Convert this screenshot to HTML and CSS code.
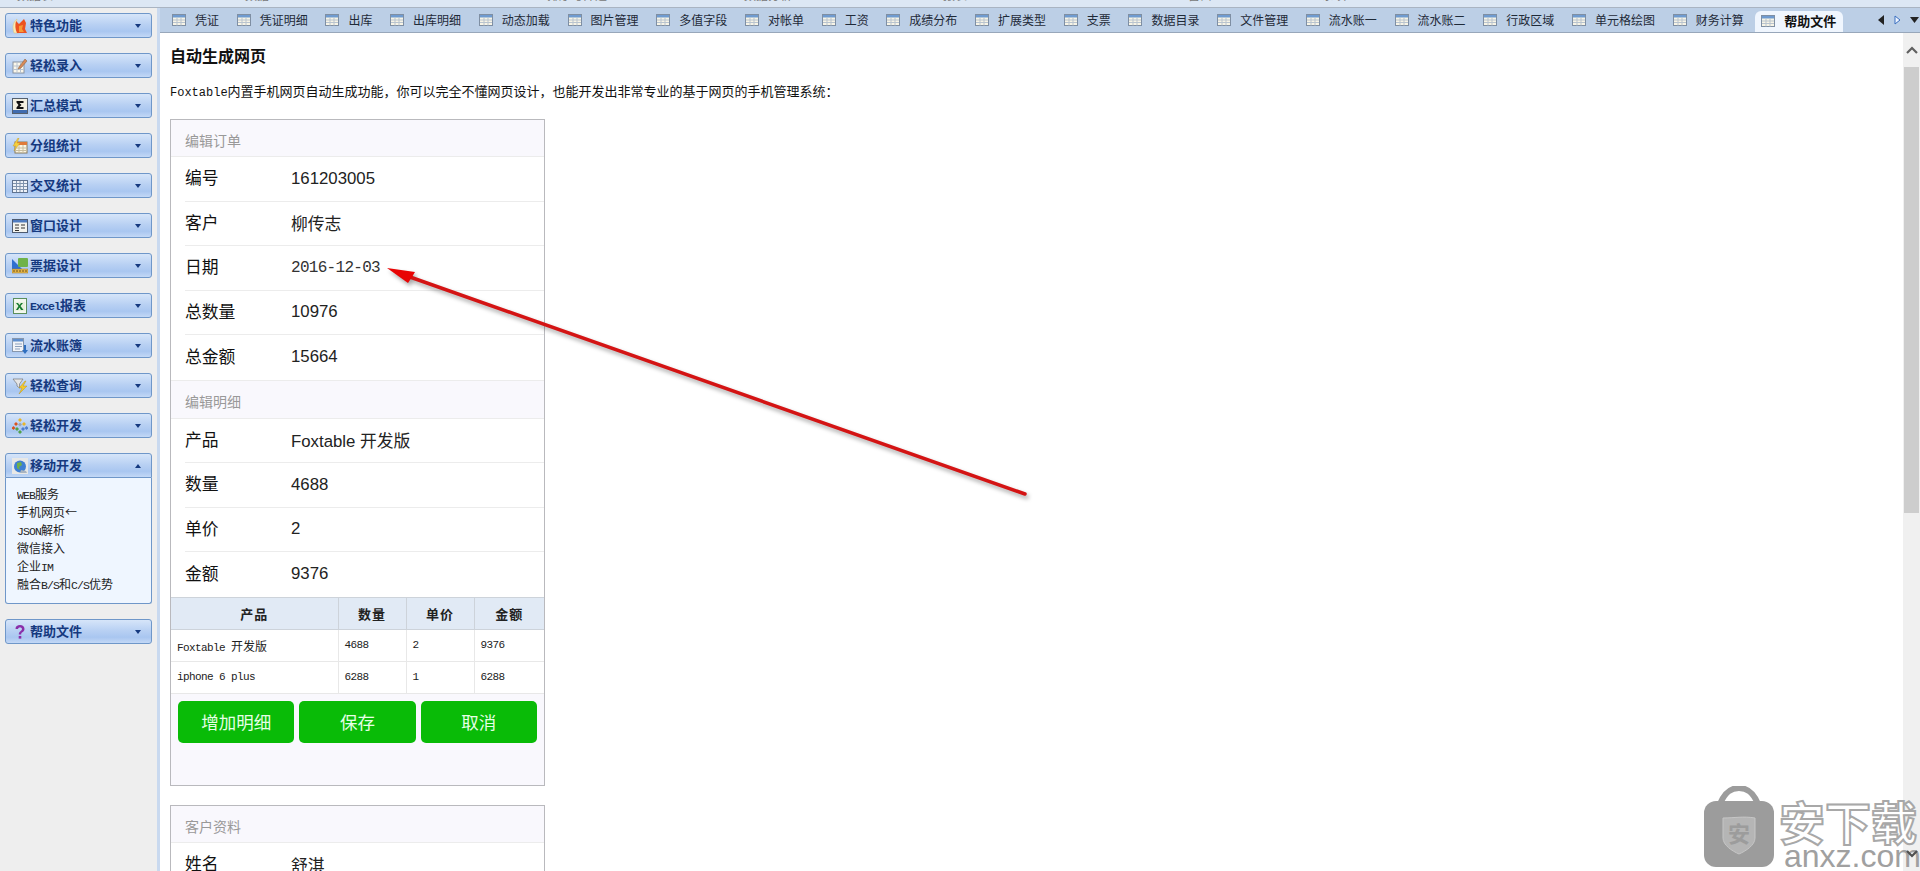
FILE: index.html
```html
<!DOCTYPE html>
<html lang="zh-CN">
 <head>
  <meta charset="UTF-8" />
  <title>Foxtable 帮助文件</title>
  <link rel="stylesheet" href="styles.css">
 </head>
 <body>
  <svg class="defs" width="0" height="0">
   <symbol id="tbl" viewBox="0 0 14 12">
    <rect x="0.5" y="0.5" width="13" height="11" fill="#f7f4e6" stroke="#7f8fa3" />
    <rect x="1" y="1" width="12" height="2.5" fill="#6f9bd0" />
    <path d="M1 6h12M1 8.5h12M5 3.5v8M9 3.5v8" stroke="#b9c4cf" fill="none" />
   </symbol>
  </svg>

  <!-- ribbon is cut off, only the group captions show -->
  <div class="strip">
   <span>数据表</span>
   <span>数据</span>
   <span>排序与筛选</span>
   <span>数据分析</span>
   <span>报表</span>
   <span>窗口</span>
   <span>杂项</span>
  </div>

  <div class="app">
   <div class="sidebar">
    <div class="nav-btn">
     <svg class="nav-icon" viewBox="0 0 16 16"><path d="M5 1C1 4 0 9 2 15h5C4 11 4 6 5 1z" fill="#f8e9b4" stroke="#d9c27a" stroke-width=".5" /><path d="M4 3l3 3 5-5 2 4-1 6 2 4H5C3 11 3 7 4 3z" fill="#ec5220" /><path d="M7 8l4-1-1 4 2 3H7z" fill="#f79a34" /></svg>
     <span>特色功能</span><i class="caret"></i>
    </div>
    <div class="nav-btn">
     <svg class="nav-icon" viewBox="0 0 16 16"><rect x="1" y="4" width="11" height="11" fill="#fbf7ea" stroke="#8a93a0" /><path d="M1 8h11M1 11.500h11M5 4v11M8.500 4v11" stroke="#b9c3d0" /><path d="M7 9l6-8 2 2-6 7-3 1z" fill="#d98a5a" stroke="#7a5a3a" stroke-width=".5" /></svg>
     <span>轻松录入</span><i class="caret"></i>
    </div>
    <div class="nav-btn">
     <svg class="nav-icon" viewBox="0 0 16 16"><rect x="0.500" y="0.500" width="15" height="15" fill="#f3efe0" stroke="#55606e" /><rect x="1" y="12" width="14" height="3" fill="#3f6cb0" /><path d="M4.500 3h7v2H7.500L9.500 7 7.500 9h4v2h-7V9.500L6.500 7 4.500 4.500z" fill="#111" /></svg>
     <span>汇总模式</span><i class="caret"></i>
    </div>
    <div class="nav-btn">
     <svg class="nav-icon" viewBox="0 0 16 16"><rect x="3" y="4" width="12" height="11" fill="#fbf6e4" stroke="#8a7d5c" /><rect x="3" y="4" width="12" height="3" fill="#e07b3a" /><path d="M3 10h12M3 12.500h12M7 7v8M11 7v8" stroke="#c8bea0" /><path d="M6 0L1 8h3l-2 5 6-8H5l2-5z" fill="#f6cf3e" stroke="#c49a20" stroke-width=".4" /></svg>
     <span>分组统计</span><i class="caret"></i>
    </div>
    <div class="nav-btn">
     <svg class="nav-icon" viewBox="0 0 16 16"><rect x="0.500" y="2.500" width="15" height="12" fill="#eef2f8" stroke="#5f7390" /><path d="M1 5.500h14M1 8.500h14M1 11.500h14M4.500 3v11M8 3v11M11.500 3v11" stroke="#7f93ad" /></svg>
     <span>交叉统计</span><i class="caret"></i>
    </div>
    <div class="nav-btn">
     <svg class="nav-icon" viewBox="0 0 16 16"><rect x="0.500" y="1.500" width="15" height="13" fill="#f4f4ee" stroke="#4d5b70" /><rect x="1" y="2" width="14" height="2.500" fill="#4f7cc0" /><path d="M3 7h4M3 10h4M3 12.500h4M9 7h4M9 10h4" stroke="#333" /></svg>
     <span>窗口设计</span><i class="caret"></i>
    </div>
    <div class="nav-btn">
     <svg class="nav-icon" viewBox="0 0 16 16"><path d="M0 1l10 10H0z" fill="#2f6fd0" /><rect x="6" y="0" width="10" height="9" rx="1" fill="#6fb24a" /><rect x="0" y="11" width="16" height="4" fill="#e7b64a" stroke="#9a7a2a" stroke-width=".5" /><path d="M2 12v2M5 12v2M8 12v2M11 12v2M14 12v2" stroke="#6a5218" /></svg>
     <span>票据设计</span><i class="caret"></i>
    </div>
    <div class="nav-btn">
     <svg class="nav-icon" viewBox="0 0 16 16"><rect x="1.500" y="0.500" width="13" height="15" fill="#f2f7ee" stroke="#5c8f5c" /><rect x="3" y="4" width="10" height="9" fill="#e7f0dd" /><path d="M4 5l2.500 3L4 12h2l1.500-2.500L9 12h2.500L8.500 8 11 5H9L7.500 7 6 5z" fill="#157a2e" /></svg>
     <span><b class="lat">Excel</b>报表</span><i class="caret"></i>
    </div>
    <div class="nav-btn">
     <svg class="nav-icon" viewBox="0 0 16 16"><rect x="0.500" y="0.500" width="11" height="13" fill="#f2f4f8" stroke="#8797ad" /><rect x="1" y="1" width="10" height="2.500" fill="#5f8fce" /><path d="M3 6h7M3 8.500h7M3 11h5" stroke="#8ba0bd" /><path d="M12 7v5h-2l3 4 3-4h-2V7z" fill="#2f6fc0" /></svg>
     <span>流水账簿</span><i class="caret"></i>
    </div>
    <div class="nav-btn">
     <svg class="nav-icon" viewBox="0 0 16 16"><path d="M1 1h10L7.500 6v4L5 8V6z" fill="#e6e6e6" stroke="#777" stroke-width=".7" /><path d="M13 3L7 10h3l-3 6 8-8h-4l3-5z" fill="#f4c92c" stroke="#b08a10" stroke-width=".4" /></svg>
     <span>轻松查询</span><i class="caret"></i>
    </div>
    <div class="nav-btn">
     <svg class="nav-icon" viewBox="0 0 16 16"><path d="M8 0l2 2-2 2-2-2z" fill="#e8b52c" /><path d="M4 4l2 2-2 2-2-2z" fill="#d9541e" /><path d="M12 4l2 2-2 2-2-2z" fill="#e8b52c" /><path d="M8 4.500l2 2-2 2-2-2z" fill="#9aa7b5" /><path d="M1.500 8l2 2-2 2-2-2z" fill="#d9541e" /><path d="M14.500 8l2 2-2 2-2-2z" fill="#4f7fd0" /><path d="M5 9l2 2-2 2-2-2z" fill="#52a24a" /><path d="M11 9l2 2-2 2-2-2z" fill="#4f7fd0" /><path d="M8 12l2 2-2 2-2-2z" fill="#52a24a" /></svg>
     <span>轻松开发</span><i class="caret"></i>
    </div>
    <div class="nav-btn open">
     <svg class="nav-icon" viewBox="0 0 16 16"><rect x="0" y="0" width="16" height="16" fill="#e8e8e6" /><circle cx="8" cy="8.500" r="6" fill="#3f7fd2" /><path d="M5 5l4-1 1 3-3 2 1 3-3-2z" fill="#6fb04a" /><path d="M9 12l5 1 1 2H8z" fill="#a9b4c0" /></svg>
     <span>移动开发</span><i class="caret up"></i>
    </div>
    <div class="nav-panel">
     <div><span class="lat">WEB</span>服务</div>
     <div>手机网页←</div>
     <div><span class="lat">JSON</span>解析</div>
     <div>微信接入</div>
     <div>企业<span class="lat">IM</span></div>
     <div>融合<span class="lat">B/S</span>和<span class="lat">C/S</span>优势</div>
    </div>
    <div class="nav-btn">
     <svg class="nav-icon" viewBox="0 0 16 16"><path d="M3.500 5c0-3 2-4 4.500-4s4.500 1.500 4.500 4c0 2-1.300 2.800-2.500 3.600C9.200 9.200 9.200 9.800 9.200 10.500H6.800c0-1.500.3-2.400 1.600-3.300 1-.7 1.600-1.200 1.600-2.100 0-1-.8-1.600-2-1.600S6 4.100 6 5z" fill="#8a2fa8" /><rect x="6.700" y="12" width="2.600" height="2.600" fill="#8a2fa8" /></svg>
     <span>帮助文件</span><i class="caret"></i>
    </div>
   </div>

   <div class="main">
    <div class="tabs">
     <div class="tab"><svg class="tab-icon"><use href="#tbl" /></svg>凭证</div>
     <div class="tab"><svg class="tab-icon"><use href="#tbl" /></svg>凭证明细</div>
     <div class="tab"><svg class="tab-icon"><use href="#tbl" /></svg>出库</div>
     <div class="tab"><svg class="tab-icon"><use href="#tbl" /></svg>出库明细</div>
     <div class="tab"><svg class="tab-icon"><use href="#tbl" /></svg>动态加载</div>
     <div class="tab"><svg class="tab-icon"><use href="#tbl" /></svg>图片管理</div>
     <div class="tab"><svg class="tab-icon"><use href="#tbl" /></svg>多值字段</div>
     <div class="tab"><svg class="tab-icon"><use href="#tbl" /></svg>对帐单</div>
     <div class="tab"><svg class="tab-icon"><use href="#tbl" /></svg>工资</div>
     <div class="tab"><svg class="tab-icon"><use href="#tbl" /></svg>成绩分布</div>
     <div class="tab"><svg class="tab-icon"><use href="#tbl" /></svg>扩展类型</div>
     <div class="tab"><svg class="tab-icon"><use href="#tbl" /></svg>支票</div>
     <div class="tab"><svg class="tab-icon"><use href="#tbl" /></svg>数据目录</div>
     <div class="tab"><svg class="tab-icon"><use href="#tbl" /></svg>文件管理</div>
     <div class="tab"><svg class="tab-icon"><use href="#tbl" /></svg>流水账一</div>
     <div class="tab"><svg class="tab-icon"><use href="#tbl" /></svg>流水账二</div>
     <div class="tab"><svg class="tab-icon"><use href="#tbl" /></svg>行政区域</div>
     <div class="tab"><svg class="tab-icon"><use href="#tbl" /></svg>单元格绘图</div>
     <div class="tab"><svg class="tab-icon"><use href="#tbl" /></svg>财务计算</div>
     <div class="tab active"><svg class="tab-icon"><use href="#tbl" /></svg>帮助文件</div>
     <div class="tab-arrows">
      <svg width="7" height="10" viewBox="0 0 7 10"><path d="M6 0v10L0 5z" fill="#222" /></svg>
      <svg width="7" height="10" viewBox="0 0 7 10"><path d="M1 1v8l5-4z" fill="#eef4ff" stroke="#3a6fc0" /></svg>
      <svg width="9" height="6" viewBox="0 0 9 6"><path d="M0 0h9L4.500 6z" fill="#222" /></svg>
     </div>
    </div>

    <div class="view">
     <div class="page">
      <h2>自动生成网页</h2>
      <p class="intro"><span class="intro-lat">Foxtable</span>内置手机网页自动生成功能，你可以完全不懂网页设计，也能开发出非常专业的基于网页的手机管理系统：</p>

      <div class="card">
       <div class="sec-title">编辑订单</div>
       <div class="row"><label>编号</label><span>161203005</span></div>
       <div class="row"><label>客户</label><span>柳传志</span></div>
       <div class="row"><label>日期</label><span class="date">2016-12-03</span></div>
       <div class="row"><label>总数量</label><span>10976</span></div>
       <div class="row"><label>总金额</label><span>15664</span></div>
       <div class="sec-title">编辑明细</div>
       <div class="row"><label>产品</label><span>Foxtable 开发版</span></div>
       <div class="row"><label>数量</label><span>4688</span></div>
       <div class="row"><label>单价</label><span>2</span></div>
       <div class="row"><label>金额</label><span>9376</span></div>
       <table class="detail">
        <thead>
         <tr><th>产品</th><th>数量</th><th>单价</th><th>金额</th></tr>
        </thead>
        <tbody>
         <tr><td>Foxtable <span class="zh">开发版</span></td><td>4688</td><td>2</td><td>9376</td></tr>
         <tr><td>iphone 6 plus</td><td>6288</td><td>1</td><td>6288</td></tr>
        </tbody>
       </table>
       <div class="actions">
        <button>增加明细</button>
        <button>保存</button>
        <button>取消</button>
       </div>
      </div>

      <div class="card">
       <div class="sec-title">客户资料</div>
       <div class="row"><label>姓名</label><span>舒淇</span></div>
      </div>
     </div>

     <div class="scroll">
      <div class="scroll-btn">
       <svg width="12" height="8" viewBox="0 0 12 8"><path d="M1 7l5-5 5 5" fill="none" stroke="#606060" stroke-width="2.200" /></svg>
      </div>
      <div class="thumb"></div>
      <div class="scroll-btn down">
       <svg width="12" height="8" viewBox="0 0 12 8"><path d="M1 1l5 5 5-5" fill="none" stroke="#505050" stroke-width="2.200" /></svg>
      </div>
     </div>
    </div>
   </div>
  </div>

  <!-- annotation drawn on top of the screenshot -->
  <svg class="pointer" width="1920" height="871" viewBox="0 0 1920 871">
   <path d="M410 277L1025 494" stroke="#d41414" stroke-width="3.500" stroke-linecap="round" />
   <path d="M387 268L415 272 412 277 408 283z" fill="#e80404" />
  </svg>

  <div class="watermark">
   <svg class="wm-logo" width="72" height="82" viewBox="0 0 72 82">
    <path d="M17 18C22 6 28 2 36 2s14 4 19 16" fill="none" stroke="#9c9c9c" stroke-width="6" />
    <rect x="1" y="15" width="70" height="66" rx="12" fill="#9c9c9c" />
    <path d="M20 32c11 0 21-2 32 0v20c0 7-9 13-16 16-7-3-16-9-16-16z" fill="#b5b5b5" stroke="#c6c6c6" />
    <text x="36" y="56" text-anchor="middle" class="wm-mark">安</text>
   </svg>
   <div class="wm-text">
    <div class="wm-zh">安下载</div>
    <div class="wm-en">anxz.com</div>
   </div>
  </div>
 </body>
</html>
```
FILE: styles.css
```css
html, body {
 margin: 0;
 height: 871px;
 overflow: hidden;
}
body {
 display: flex;
 flex-direction: column;
 position: relative;
 font-family: "Liberation Mono", "Noto Sans CJK SC", monospace;
 font-size: 12px;
 color: #222;
 background: #fff;
}
.defs {
 position: absolute;
}

/* top strip */
.strip {
 display: flex;
 height: 7px;
 flex: none;
 overflow: hidden;
 background: #dce7f4;
 border-bottom: 1px solid #a9b4c2;
 color: #777;
}
.strip span {
 margin-top: -10px;
 line-height: 14px;
 white-space: nowrap;
}
.strip span:nth-child(1) { margin-left: 17px; }
.strip span:nth-child(2) { margin-left: 192px; }
.strip span:nth-child(3) { margin-left: 278px; }
.strip span:nth-child(4) { margin-left: 137px; }
.strip span:nth-child(5) { margin-left: 151px; }
.strip span:nth-child(6) { margin-left: 221px; }
.strip span:nth-child(7) { margin-left: 110px; }

.app {
 display: flex;
 flex: 1;
 min-height: 0;
}

/* left panel */
.sidebar {
 width: 147px;
 flex: none;
 padding: 5px 5px 0;
 background: #eeeeee;
 border-right: 3px solid #c9d9ef;
}
.nav-btn {
 display: flex;
 align-items: center;
 box-sizing: border-box;
 height: 25px;
 margin-bottom: 15px;
 padding: 0 10px 0 6px;
 border: 1px solid #6f97c9;
 border-radius: 3px;
 background: linear-gradient(#d6e5f9, #b9d1f3 45%, #a9c6f0 75%, #c3d8f6);
 color: #15397f;
 font-family: "Noto Sans CJK SC", sans-serif;
 font-size: 13px;
 font-weight: 700;
}
.nav-btn span {
 flex: 1;
 margin-left: 2px;
 line-height: 20px;
 height: 22px;
}
.nav-btn .lat {
 font-family: "Liberation Mono", monospace;
 font-size: 11.500px;
 letter-spacing: -.9px;
}
.nav-btn.open {
 margin-bottom: 0;
 border-radius: 3px 3px 0 0;
}
.nav-icon {
 width: 16px;
 height: 16px;
 flex: none;
}
.caret {
 width: 0;
 height: 0;
 border-left: 3.5px solid transparent;
 border-right: 3.5px solid transparent;
 border-top: 4px solid #15397f;
}
.caret.up {
 border-top: none;
 border-bottom: 4px solid #15397f;
}
.nav-panel {
 box-sizing: border-box;
 height: 126px;
 margin-bottom: 15px;
 padding: 7px 0 0 11px;
 border: 1px solid #6f97c9;
 border-top: none;
 border-radius: 0 0 3px 3px;
 background: #eff6ff;
 font-family: "Noto Sans CJK SC", sans-serif;
 color: #222;
}
.nav-panel div {
 height: 18px;
 line-height: 18px;
 overflow: hidden;
}
.nav-panel .lat {
 font-family: "Liberation Mono", monospace;
 font-size: 11.500px;
 letter-spacing: -.9px;
}

/* tab bar */
.main {
 display: flex;
 flex-direction: column;
 flex: 1;
 min-width: 0;
}
.tabs {
 display: flex;
 box-sizing: border-box;
 height: 25px;
 flex: none;
 padding-left: 12px;
 background: #bccfe6;
 border-bottom: 1px solid #98a7ba;
 font-family: "Noto Sans CJK SC", sans-serif;
 font-size: 12px;
 line-height: 22px;
 color: #1f2a38;
 white-space: nowrap;
}
.tab {
 display: flex;
 align-items: center;
 margin-right: 17.7px;
 padding-bottom: 1px;
}
.tab-icon {
 width: 14px;
 height: 12px;
 margin-right: 9px;
}
.tab.active {
 height: 21px;
 box-sizing: border-box;
 margin: 3px 0 0 -6px;
 padding: 0 7px 2px 6px;
 border-radius: 6px 6px 0 0;
 background: #f0f6fe;
 font-size: 13px;
 font-weight: 700;
 color: #111;
}
.tab-arrows {
 display: flex;
 align-items: center;
 gap: 9px;
 margin-left: 35px;
}

/* content */
.view {
 display: flex;
 flex: 1;
 min-height: 0;
}
.page {
 flex: 1;
 padding: 11px 0 0 10px;
 overflow: hidden;
}
.page h2 {
 margin: 0;
 font-family: "Noto Sans CJK SC", sans-serif;
 font-size: 16px;
 font-weight: 700;
 line-height: 22px;
 color: #111;
}
.intro {
 margin: 15px 0 0;
 font-family: "Noto Sans CJK SC", sans-serif;
 font-size: 13px;
 line-height: 20px;
 color: #111;
}
.intro-lat {
 font-family: "Liberation Mono", monospace;
 font-size: 12px;
}
.card {
 box-sizing: border-box;
 width: 375px;
 margin-top: 16px;
 border: 1px solid #b9b9bd;
 background: #fff;
 font-family: "Liberation Sans", "Noto Sans CJK SC", sans-serif;
 font-size: 16.800px;
}
.card + .card {
 margin-top: 19px;
}
.sec-title {
 box-sizing: border-box;
 height: 37px;
 padding-left: 14px;
 background: #f9f8fd;
 border-bottom: 1px solid #ececec;
 font-family: "Noto Sans CJK SC", sans-serif;
 font-size: 14px;
 line-height: 40px;
 color: #999;
 overflow: hidden;
}
.row + .sec-title {
 border-top: 1px solid #ececec;
 height: 39px;
}
.row {
 display: flex;
 align-items: center;
 box-sizing: border-box;
 height: 44.500px;
 margin-left: 14px;
 border-bottom: 1px solid #ececec;
 color: #222;
}
.row:has(+ .sec-title), .row:has(+ .detail), .row:last-child {
 border-bottom: none;
}
.row label {
 width: 106px;
 flex: none;
 font-family: "Noto Sans CJK SC", sans-serif;
 color: #111;
 line-height: 24px;
 padding-bottom: 3px;
}
.date {
 font-family: "Liberation Mono", monospace;
 font-size: 16px;
 letter-spacing: -.7px;
 color: #333;
}
.detail {
 width: 100%;
 table-layout: fixed;
 border-collapse: collapse;
 font-family: "Liberation Mono", monospace;
 font-size: 11px;
 letter-spacing: -.6px;
 color: #222;
}
.detail th, .detail td {
 height: 32px;
 box-sizing: border-box;
 padding: 0 6px;
 border: 1px solid #e8e8e8;
 text-align: left;
 font-weight: 400;
}
.detail tr > :first-child {
 width: 167px;
 border-left: none;
}
.detail tr > :nth-child(2), .detail tr > :nth-child(3) {
 width: 68px;
}
.detail tr > :last-child {
 border-right: none;
}
.detail th {
 border-color: #cdd3da;
 background: #e1eaf5;
 text-align: center;
 font-family: "Noto Sans CJK SC", sans-serif;
 font-size: 13px;
 font-weight: 700;
 letter-spacing: 1px;
 color: #222;
}
.detail .zh {
 font-family: "Noto Sans CJK SC", sans-serif;
 font-size: 12px;
 letter-spacing: 0;
}
.actions {
 display: flex;
 gap: 5px;
 padding: 7px 7px 42px;
 background: #f9f8fd;
}
.actions button {
 flex: 1;
 height: 42px;
 padding: 0;
 border: none;
 border-radius: 5px;
 background: #09bb07;
 color: #e6ffe6;
 font-family: "Noto Sans CJK SC", sans-serif;
 font-size: 17.500px;
}

/* scrollbar */
.scroll {
 display: flex;
 flex-direction: column;
 width: 17px;
 flex: none;
 background: #f0f0f0;
}
.scroll-btn {
 display: flex;
 align-items: center;
 justify-content: center;
 height: 34px;
 flex: none;
}
.scroll-btn.down {
 position: relative;
 z-index: 3;
 margin-top: auto;
 padding-top: 3px;
}
.thumb {
 width: 15px;
 height: 446px;
 margin-left: 1px;
 background: #cdcdcd;
}

/* red arrow over the page */
.pointer {
 position: absolute;
 left: 0;
 top: 0;
 pointer-events: none;
 filter: drop-shadow(2px 3px 2px rgba(0, 0, 0, .35));
}

/* site stamp */
.watermark {
 position: absolute;
 left: 1703px;
 top: 786px;
 display: flex;
 width: 217px;
 z-index: 2;
 overflow: hidden;
}
.wm-logo {
 flex: none;
}
.wm-mark {
 font-family: "Noto Sans CJK SC", sans-serif;
 font-size: 22px;
 font-weight: 700;
 fill: #9c9c9c;
}
.wm-text {
 margin-left: 4px;
 padding-top: 11px;
}
.wm-zh {
 font-family: "Noto Sans CJK SC", sans-serif;
 font-size: 46px;
 font-weight: 700;
 line-height: 47px;
 color: #fff;
 white-space: nowrap;
 -webkit-text-stroke: 2px #a8a8a8;
}
.wm-en {
 margin-left: 5px;
 font-family: "Liberation Sans", sans-serif;
 font-size: 32px;
 line-height: 24px;
 color: #a0a0a0;
 white-space: nowrap;
}
```
